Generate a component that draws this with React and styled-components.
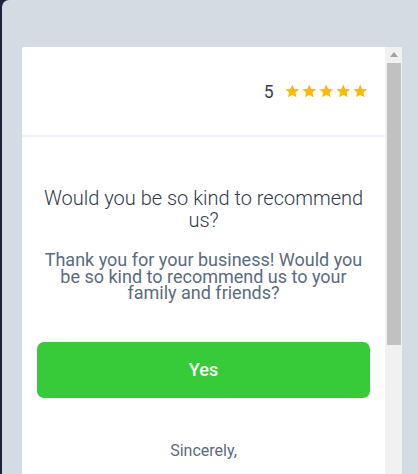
import React from "react";
import styled, { createGlobalStyle } from "styled-components";

const Global = createGlobalStyle`
  html, body { margin: 0; padding: 0; }
  body {
    width: 418px;
    height: 474px;
    overflow: hidden;
    background: #20223a;
    font-family: Roboto, "Noto Sans", sans-serif;
  }
`;

const Frame = styled.div`
  margin-left: 2px;
  height: 474px;
  background: #d4dbe3;
  border-top-left-radius: 7px;
  padding: 47px 0 0 20px;
  box-sizing: border-box;
  display: flex;
  align-items: flex-start;
`;

const Panel = styled.div`
  width: 363px;
  height: 427px;
  background: #ffffff;
  border-top-left-radius: 2px;
  overflow: hidden;
  display: flex;
  flex-direction: column;
`;

const Header = styled.div`
  height: 88px;
  display: flex;
  align-items: center;
  justify-content: flex-end;
  padding-right: 18px;
  border-bottom: 2px solid #eef3f7;
  gap: 11px;
`;

const Score = styled.span`
  font-size: 17.5px;
  color: #3a3f4b;
  line-height: 1;
  margin-top: 4px;
`;

const Stars = styled.div`
  display: flex;
  gap: 2.5px;
`;

const Body = styled.div`
  padding: 0 15px;
  display: flex;
  flex-direction: column;
  align-items: stretch;
  text-align: center;
`;

const Question = styled.h2`
  margin: 50px 0 0;
  font-size: 20px;
  font-weight: 300;
  line-height: 22px;
  color: #2f3a4c;
`;

const Message = styled.p`
  margin: 21px 0 0;
  font-size: 18px;
  font-weight: 400;
  line-height: 16.5px;
  color: #5a6b80;
`;

const YesButton = styled.button`
  margin-top: 40px;
  height: 56px;
  border: none;
  border-radius: 7px;
  background: #37cb3a;
  color: #ffffff;
  font-family: Roboto, sans-serif;
  font-size: 18px;
  font-weight: 500;
  cursor: pointer;
`;

const Signoff = styled.p`
  margin: 43px 0 0;
  font-size: 16px;
  color: #5a6b80;
  line-height: 20px;
`;

const Scrollbar = styled.div`
  width: 17px;
  height: 427px;
  background: #f1f1f1;
  display: flex;
  flex-direction: column;
  align-items: center;
`;

const Arrow = styled.div`
  margin-top: 5px;
  width: 0;
  height: 0;
  border-left: 4px solid transparent;
  border-right: 4px solid transparent;
  border-bottom: 5px solid #a3a3a3;
`;

const Thumb = styled.div`
  margin-top: 6px;
  width: 14px;
  height: 282px;
  background: #c1c1c1;
`;

const Star = () => (
  <svg width="14.5" height="14" viewBox="0 0 24 23">
    <path
      d="M12 0.8l3.3 7.2 7.9.8-5.9 5.3 1.7 7.8L12 17.9l-7 4 1.7-7.8L.8 8.8l7.9-.8z"
      fill="#ffb900"
    />
  </svg>
);

export default function App() {
  return (
    <>
      <Global />
      <Frame>
        <Panel>
          <Header>
            <Score>5</Score>
            <Stars>
              {[0, 1, 2, 3, 4].map((i) => (
                <Star key={i} />
              ))}
            </Stars>
          </Header>
          <Body>
            <Question>Would you be so kind to recommend us?</Question>
            <Message>
              Thank you for your business! Would you be so kind to recommend us
              to your family and friends?
            </Message>
            <YesButton>Yes</YesButton>
            <Signoff>Sincerely,</Signoff>
          </Body>
        </Panel>
        <Scrollbar>
          <Arrow />
          <Thumb />
        </Scrollbar>
      </Frame>
    </>
  );
}
